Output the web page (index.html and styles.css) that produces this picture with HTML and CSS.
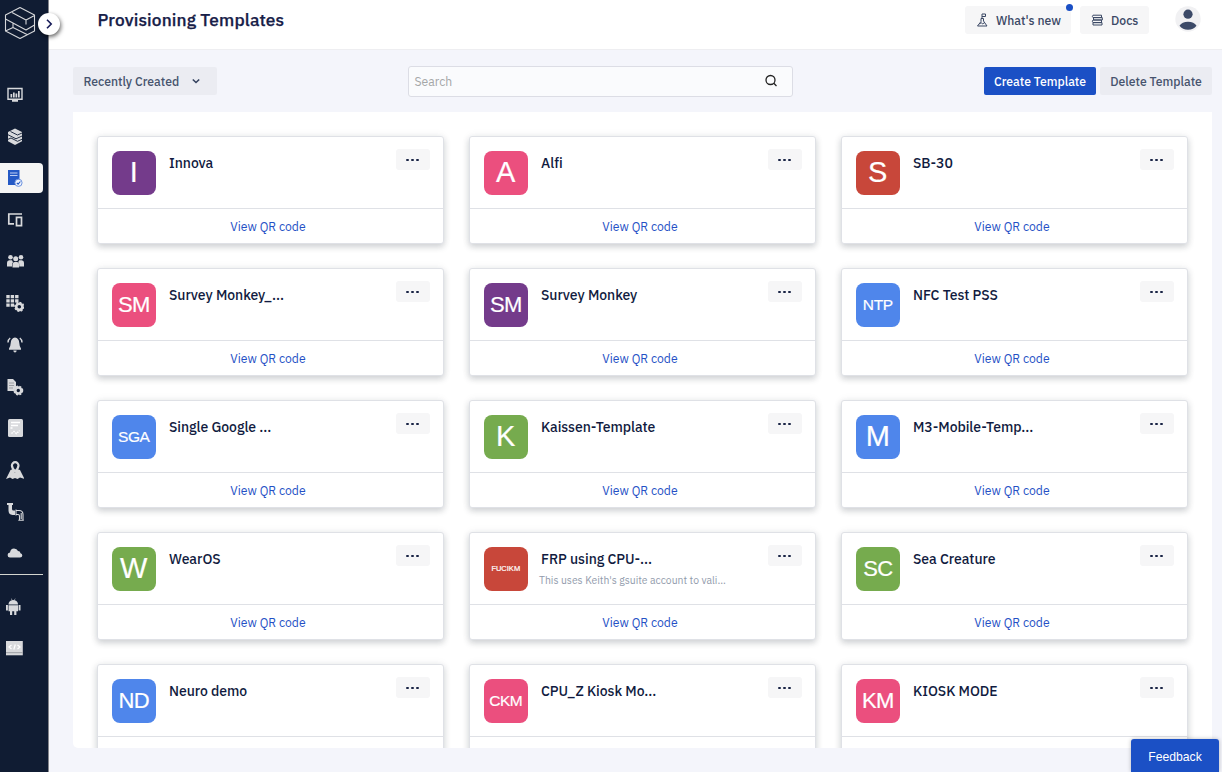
FILE: index.html
```html
<!DOCTYPE html>
<html lang="en">
<head>
<meta charset="utf-8">
<title>Provisioning Templates</title>
<link rel="stylesheet" href="styles.css">
</head>
<body>
<div class="app">
  <aside class="sidebar">
    <svg class="logo" viewBox="0 0 32 34"><path d="M16 1.500 30.500 9v16L16 32.500 1.500 25V9ZM8 6.500l14 7.500 8.500-4.500M1.500 13 22 24l8.500-5M22 14v4.500M9 17v4.500l-7.500 3.500M9 21.500l14 7"/></svg>
    <button class="expand" aria-label="Expand"><svg viewBox="0 0 10 10"><path d="M3 .8 7.200 5 3 9.200"/></svg></button>
    <nav class="nav">
      <a class="item"><svg viewBox="0 0 18 18"><path class="ln" d="M2 2.500h14v10.700H2z"/><path d="M4.500 8h1.700v3.500H4.500zM7 6.500h1.700v5H7zM9.500 7.500h1.700v4H9.500zM12 5h1.700v6.500H12zM6 14h6v1.700H6z"/></svg></a>
      <a class="item"><svg viewBox="0 0 18 18"><path d="M9 .5 16 4v9.300L9 17l-7-3.700V4Z"/><path class="cut" d="M4.500 3.500 11.500 7 16 5M1.500 6.500l8.500 4.300 6.500-3M1.500 11.500 5 10l6.500 3.300 5-2.300"/></svg></a>
      <a class="item active"><svg viewBox="0 0 18 18"><path class="blue" d="M2 1h11.500v15H2z"/><path class="pale" d="M4 4h7.500M4 6.500h7.500"/><circle class="badge" cx="12.500" cy="13.800" r="3.600"/><path class="tick" d="m10.800 13.800 1.300 1.300 2.300-2.600"/></svg></a>
      <a class="item"><svg viewBox="0 0 18 18"><path class="ln2" d="M16 3H2.800v9.800H8M10.500 6.300h5v8.400h-5z"/></svg></a>
      <a class="item"><svg viewBox="0 0 18 18"><circle cx="4.500" cy="4.300" r="2.300"/><circle cx="15" cy="4.300" r="2.300"/><path d="M1 13.500V9.800Q1 7.300 3.300 7.300H6l1 2-1 1.500v2.700zM18 13.500V9.800q0-2.500-2.300-2.500h-2.500l-1 2 1 1.500v2.700z"/><circle cx="9.700" cy="5.800" r="2.500"/><path d="M6.500 14.500v-3q0-2.600 2.300-2.600h2q2.300 0 2.300 2.600v3z"/></svg></a>
      <a class="item"><svg viewBox="0 0 18 18"><path d="M.3 1h3.400v3.300H.3zm4.400 0h3.400v3.300H4.700zm4.400 0h3.400v3.300H9.100zM.3 5.200h3.400v3.300H.3zm4.400 0h3.400v3.300H4.700zm4.400 0h3.400v3.300H9.100zM.3 9.400h3.400v3.300H.3zm4.400 0h3.400v3.300H4.700z"/><circle class="cog" cx="13.300" cy="12.800" r="3.100"/><circle class="teeth" cx="13.300" cy="12.800" r="4.400"/></svg></a>
      <a class="item"><svg viewBox="0 0 18 18"><path d="M9 1.500q4 .5 4.300 5.500.2 4 1.700 5.500v1.300H3v-1.300Q4.500 11 4.700 7 5 2 9 1.500zM7.300 14.500h3.400Q10.500 16.500 9 16.500t-1.700-2z"/><path class="ln" d="M4.200 2Q2 3.500 2 6.500M13.800 2Q16 3.500 16 6.500"/></svg></a>
      <a class="item"><svg viewBox="0 0 18 18"><path d="M1.500 1H7l3 3v7H8v2H1.500z"/><path class="shade" d="M3 5h5M3 7.500h5M3 10h4"/><circle class="cog" cx="12.300" cy="12.500" r="3"/><circle class="teeth" cx="12.300" cy="12.500" r="4.200"/></svg></a>
      <a class="item"><svg class="tall" viewBox="0 0 18 20"><rect x="2" y="1" width="15" height="18" rx="1.500"/><path class="white" d="M5 4.500h9M5 7.500h7M4.500 10h2"/><path class="white dots" d="M5.500 15.500 8 13.500l2.500 2 3-3"/></svg></a>
      <a class="item"><svg class="tall" viewBox="0 0 18 20"><path d="M4.500 10 7 9l2 4 2-4 3 1 4.500 9-4.500-1.500-2.500 1.500L9 18l-2.500 1L4 17.500 0 19z"/><path class="pin" d="M9.200 2.200a3.300 3.300 0 0 1 3.300 3.300Q12.500 8 9.200 11.500 5.900 8 5.900 5.500A3.300 3.300 0 0 1 9.200 2.200z"/></svg></a>
      <a class="item"><svg class="tall" viewBox="0 0 18 20"><path d="M1 1h6v2H6v4q0 1.500 1.500 1.500H9V13H6.500Q2.500 12.500 2.500 8.500V3H1z"/><path class="pipe" d="M10 7.500v6M10 8.500h3Q17 8.500 17 12.500V18M10 12.500h2q1.500 0 1.500 1.500v4M12.300 18.300h5.500M15.200 11v6"/></svg></a>
      <a class="item"><svg viewBox="0 0 18 18"><path d="M5 13.500H4Q1.600 13.500 1.600 11 1.600 8.800 4 8.600 4.600 4.600 8 4.500q3 0 4 2.500 2.200.1 2.500 2.300 1.800.4 1.800 2.200 0 2-2.300 2z"/></svg></a>
    </nav>
    <nav class="nav lower">
      <a class="item"><svg viewBox="0 0 18 18"><path d="M2.500 6.500Q2.500 3 6 2.300L5 .7l.4-.3 1.200 1.800q.7-.2 1.400 0L9.100.4l.4.3-1 1.600q3.500.7 3.500 4.200zM2.500 7.200H12v6H2.500zM0 7h1.900v5.500H0zM12.600 7h1.900v5.500h-1.900zM4 13h2.200v4H4zM8.200 13h2.200v4H8.200z"/></svg></a>
      <a class="item"><svg viewBox="0 0 18 18"><path d="M0 2h16.800v14.300H0z"/><path class="white thin" d="M5.500 6 3 8l2.500 2M9.300 5.500l-1.500 5M11.500 6l2.500 2-2.500 2"/><path class="shade" d="M0 13.700h16.800"/></svg></a>
    </nav>
  </aside>
  <div class="page">
    <header class="top">
      <h1>Provisioning Templates</h1>
      <div class="top-actions">
        <button class="chip news"><svg viewBox="0 0 14 16"><path d="M7 6V2h3.500v2.500H7M6 6.500h2.500V9l3.500 5H2.500L6 9.500zM4.500 11.800l1.700-1 1.500 1 2-1.200"/></svg><span>What's new</span><i class="dot"></i></button>
        <button class="chip docs"><svg viewBox="0 0 14 14"><path d="M11.500 2.200H3q-1.300 1.200 0 2.400h8.500zM3.500 4.600h8.800V7H3.500zM11.500 7H3q-1.300 1.300 0 2.600h8.500zM3 9.600h9V12H3z"/></svg><span>Docs</span></button>
        <svg class="avatar" viewBox="0 0 26 26"><circle class="disc" cx="13" cy="13" r="12.700"/><circle cx="13" cy="8.200" r="4.600"/><path d="M4.500 19.800Q7 15.800 13 15.800t8.500 4Q18.500 23.800 13 23.800t-8.500-4z"/></svg>
      </div>
    </header>
    <div class="tools">
      <button class="btn sort"><span>Recently Created</span><svg viewBox="0 0 10 10"><path d="m1.800 3.500 3.200 3 3.200-3"/></svg></button>
      <label class="search"><span>Search</span><svg viewBox="0 0 14 14"><circle cx="6.500" cy="6" r="4.500"/><path d="m9.800 9.300 2.700 2.700"/></svg></label>
      <div class="actions"><button class="btn primary">Create Template</button><button class="btn delete">Delete Template</button></div>
    </div>
    <main class="panel">
      <div class="grid">
        <article class="card"><div class="head"><b class="tile purple l1">I</b><div class="info"><h2>Innova</h2></div><button class="more"><i></i><i></i><i></i></button></div><a class="qr"><span>View QR code</span></a></article>
        <article class="card"><div class="head"><b class="tile pink l1">A</b><div class="info"><h2>Alfi</h2></div><button class="more"><i></i><i></i><i></i></button></div><a class="qr"><span>View QR code</span></a></article>
        <article class="card"><div class="head"><b class="tile red l1">S</b><div class="info"><h2>SB-30</h2></div><button class="more"><i></i><i></i><i></i></button></div><a class="qr"><span>View QR code</span></a></article>
        <article class="card"><div class="head"><b class="tile pink l2">SM</b><div class="info"><h2>Survey Monkey_...</h2></div><button class="more"><i></i><i></i><i></i></button></div><a class="qr"><span>View QR code</span></a></article>
        <article class="card"><div class="head"><b class="tile purple l2">SM</b><div class="info"><h2>Survey Monkey</h2></div><button class="more"><i></i><i></i><i></i></button></div><a class="qr"><span>View QR code</span></a></article>
        <article class="card"><div class="head"><b class="tile azure l3">NTP</b><div class="info"><h2>NFC Test PSS</h2></div><button class="more"><i></i><i></i><i></i></button></div><a class="qr"><span>View QR code</span></a></article>
        <article class="card"><div class="head"><b class="tile azure l3">SGA</b><div class="info"><h2>Single Google ...</h2></div><button class="more"><i></i><i></i><i></i></button></div><a class="qr"><span>View QR code</span></a></article>
        <article class="card"><div class="head"><b class="tile green l1">K</b><div class="info"><h2>Kaissen-Template</h2></div><button class="more"><i></i><i></i><i></i></button></div><a class="qr"><span>View QR code</span></a></article>
        <article class="card"><div class="head"><b class="tile azure l1">M</b><div class="info"><h2>M3-Mobile-Temp...</h2></div><button class="more"><i></i><i></i><i></i></button></div><a class="qr"><span>View QR code</span></a></article>
        <article class="card"><div class="head"><b class="tile green l1">W</b><div class="info"><h2>WearOS</h2></div><button class="more"><i></i><i></i><i></i></button></div><a class="qr"><span>View QR code</span></a></article>
        <article class="card"><div class="head"><b class="tile red l6">FUCIKM</b><div class="info"><h2>FRP using CPU-...</h2><p>This uses Keith's gsuite account to vali...</p></div><button class="more"><i></i><i></i><i></i></button></div><a class="qr"><span>View QR code</span></a></article>
        <article class="card"><div class="head"><b class="tile green l2">SC</b><div class="info"><h2>Sea Creature</h2></div><button class="more"><i></i><i></i><i></i></button></div><a class="qr"><span>View QR code</span></a></article>
        <article class="card"><div class="head"><b class="tile azure l2">ND</b><div class="info"><h2>Neuro demo</h2></div><button class="more"><i></i><i></i><i></i></button></div><a class="qr"></a></article>
        <article class="card"><div class="head"><b class="tile pink l3">CKM</b><div class="info"><h2>CPU_Z Kiosk Mo...</h2></div><button class="more"><i></i><i></i><i></i></button></div><a class="qr"></a></article>
        <article class="card"><div class="head"><b class="tile pink l2">KM</b><div class="info"><h2>KIOSK MODE</h2></div><button class="more"><i></i><i></i><i></i></button></div><a class="qr"></a></article>
      </div>
    </main>
  </div>
  <button class="feedback">Feedback</button>
</div>
</body>
</html>
```

FILE: styles.css
```css
* { box-sizing: border-box; }
body { margin: 0; background: #fff; font-family: "IBM Plex Sans", Roboto, "Liberation Sans", sans-serif; color: #172048; overflow: hidden; }
h1, h2, p { margin: 0; }
button { border: 0; padding: 0; font: inherit; color: inherit; }
.app { position: relative; display: flex; width: 1222px; height: 772px; background: #f4f5fb; }

.sidebar { position: relative; width: 49px; height: 772px; background: #101c33; border-right: 1px solid #85868c; padding-top: 6px; flex: none; }
.logo { display: block; width: 32px; height: 34px; margin-left: 4px; fill: none; stroke: #d5d6d9; stroke-width: 1.1; stroke-linejoin: round; }
.expand { position: absolute; z-index: 2; left: 38px; top: 13px; width: 22px; height: 22px; border-radius: 50%; background: #fff; box-shadow: 1px 2px 4px rgba(0, 0, 0, .6); display: flex; align-items: center; justify-content: center; }
.expand svg { width: 10px; height: 10px; fill: none; stroke: #171b58; stroke-width: 1.6; }
.nav { display: flex; flex-direction: column; width: 43px; margin-top: 34px; border-bottom: 1px solid #d3d5cf; }
.nav.lower { margin-top: 11px; border: 0; }
.nav.lower .item { height: 41px; }
.item { height: 41.700px; display: flex; align-items: center; padding-left: 6px; }
.item svg { width: 18px; height: 18px; fill: #d8d9dc; display: block; }
.item svg.tall { height: 20px; }
.item.active { height: 29.700px; margin: 6px 0; background: #f5f5f5; border-radius: 0 4px 4px 0; }
.item .ln { fill: none; stroke: #d8d9dc; stroke-width: 1.4; }
.item .ln2 { fill: none; stroke: #d8d9dc; stroke-width: 1.700; }
.item .cut { fill: none; stroke: #101c33; stroke-width: .9; }
.item .blue { fill: #2459c5; }
.item .pale { stroke: #bfd0f3; stroke-width: 1.200; }
.item .badge { fill: #eef3fd; stroke: #6d93de; stroke-width: 1; }
.item .tick { fill: none; stroke: #2459c5; stroke-width: 1.100; }
.item .cog { fill: #101c33; stroke: #d8d9dc; stroke-width: 2.600; }
.item .teeth { fill: none; stroke: #d8d9dc; stroke-width: 1.500; stroke-dasharray: 1.900 1.500; }
.item .shade { fill: none; stroke: #9b9da2; stroke-width: 1; }
.item .white { fill: none; stroke: #fff; stroke-width: 1.400; }
.item .thin { stroke-width: 1.200; }
.item .dots { stroke-dasharray: 1.500 1; }
.item .pin { fill: #101c33; stroke: #d8d9dc; stroke-width: 2.200; }
.item .pipe { fill: none; stroke: #d8d9dc; stroke-width: 1.100; }

.page { flex: 1; min-width: 0; }
.top { height: 50px; background: #fff; border-bottom: 1px solid #eeeef1; display: flex; justify-content: space-between; padding: 6px 22px 0 48.500px; }
h1 { font-size: 17.300px; line-height: 28px; font-weight: 500; -webkit-text-stroke: .25px; letter-spacing: .14px; white-space: nowrap; }
.top-actions { display: flex; align-items: flex-start; }
.chip { position: relative; height: 28px; background: #f6f6f7; border-radius: 3px; display: flex; align-items: center; font-size: 12.200px; font-weight: 500; color: #3b4865; white-space: nowrap; }
.chip svg { fill: none; stroke: #3b4865; stroke-width: 1; }
.news { width: 106px; padding-left: 10px; gap: 7px; }
.news svg { width: 14px; height: 16px; }
.docs { width: 69px; margin-left: 9px; padding-left: 10px; gap: 7px; }
.docs svg { width: 14px; height: 14px; }
.dot { position: absolute; right: -2px; top: -2px; width: 7px; height: 7px; border-radius: 50%; background: #1a4fc5; }
.avatar { width: 26px; height: 26px; margin-left: 25.500px; margin-right: -.5px; fill: #3c4a68; }
.avatar .disc { fill: #f1f1f3; }

.tools { display: flex; height: 61.500px; padding: 17px 10px 0 24px; align-items: flex-start; }
.btn { height: 28px; border-radius: 2px; font-size: 12.200px; font-weight: 500; color: #46536d; background: #ebecf2; white-space: nowrap; }
.sort { width: 144px; display: flex; align-items: center; padding-left: 10.500px; gap: 12px; }
.sort svg { width: 10px; height: 10px; fill: none; stroke: #33415e; stroke-width: 1.600; }
.search { width: 385px; height: 31px; margin: -1px 0 0 191px; border: 1.500px solid #dcdde5; border-radius: 3px; background: #fafbfd; display: flex; justify-content: space-between; align-items: center; padding: 0 14px 2px 5.500px; font-size: 12.200px; color: #a5a7a8; }
.search svg { width: 14px; height: 14px; fill: none; stroke: #222; stroke-width: 1.300; }
.actions { display: flex; gap: 4px; margin-left: auto; }
.btn.primary { width: 112px; background: #1b50c5; color: #fff; }
.delete { width: 112px; }

.panel { width: 1139px; height: 636.500px; margin-left: 24px; background: #fff; border-radius: 0 0 5px 5px; overflow: hidden; padding: 24.500px 24px 0; }
.grid { display: grid; grid-template-columns: repeat(3, 347px); column-gap: 25px; row-gap: 24px; }
.card { height: 108px; border: 1px solid #dfe1e6; border-radius: 3px; background: #fff; box-shadow: 0 3px 6px rgba(40, 50, 60, .2), 0 0 10px rgba(40, 50, 60, .06); }
.head { height: 72px; display: flex; align-items: flex-start; padding: 14px 13px 0 14px; border-bottom: 1px solid #dfe1e6; }
.tile { flex: none; width: 43.500px; height: 43.500px; border-radius: 8px; color: #fff; font-family: "Liberation Sans", sans-serif; font-weight: 400; text-align: center; line-height: 43px; -webkit-text-stroke: .2px; }
.l1 { font-size: 29px; }
.l2 { font-size: 22px; letter-spacing: -.7px; }
.l3 { font-size: 15.500px; letter-spacing: -.4px; }
.l6 { font-size: 7.500px; }
.purple { background: #743b8b; }
.pink { background: #eb4f7e; }
.red { background: #c8473a; }
.azure { background: #4f86eb; }
.green { background: #76ab4e; }
.info { flex: 1; padding: 2px 0 0 13.500px; white-space: nowrap; }
h2 { font-size: 14px; line-height: 20px; font-weight: 500; letter-spacing: -.05px; color: #111b40; }
.info p { font-size: 10.400px; line-height: 13px; color: #929bac; margin: 5px 0 0 -2px; }
.more { flex: none; width: 34px; height: 21px; margin-top: -2px; border-radius: 3px; background: #f6f6f7; display: flex; align-items: center; justify-content: center; gap: 2.500px; padding: 1px 1px 0 0; }
.more i { width: 2.500px; height: 2.500px; border-radius: 50%; background: #1a2446; }
.qr { height: 34px; display: flex; align-items: center; justify-content: center; padding: 0 5px 0 0; font-size: 12.200px; color: #2450c5; }
.feedback { position: absolute; right: 3px; bottom: 0; width: 88px; height: 33px; border-radius: 3px 3px 0 0; background: #1b50c5; color: #fff; font-family: "Liberation Sans", sans-serif; font-size: 12.200px; padding-top: 2px; box-shadow: 0 0 4px rgba(0, 0, 0, .25); }
```
